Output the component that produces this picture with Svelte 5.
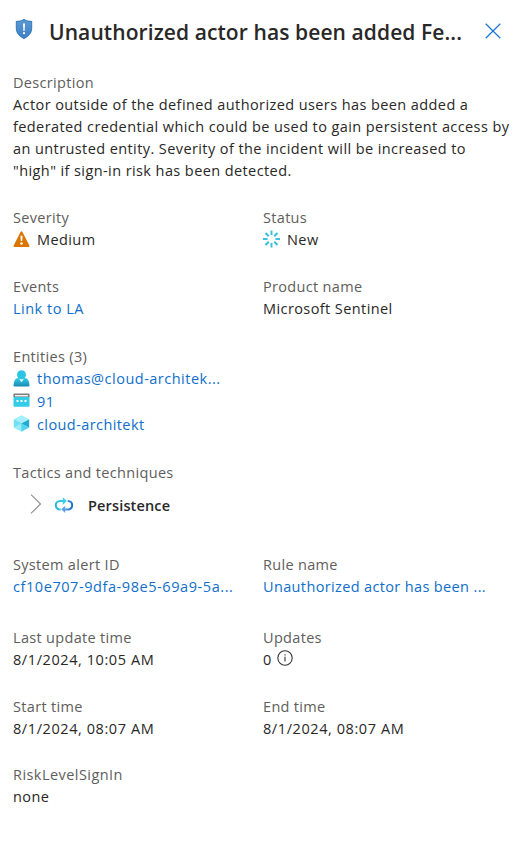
<script>
  const desc = [
    'Actor outside of the defined authorized users has been added a',
    'federated credential which could be used to gain persistent access by',
    'an untrusted entity. Severity of the incident will be increased to',
    '"high" if sign-in risk has been detected.'
  ];
  const rays = [0, 45, 90, 135, 180, 225, 270, 315];
</script>

<main>
  <header>
    <svg class="shield" width="18" height="22" viewBox="0 0 18 22">
      <defs>
        <linearGradient id="sh" x1="0" y1="0" x2="0" y2="1"><stop offset="0" stop-color="#5c99d3" /><stop offset="1" stop-color="#3c80c5" /></linearGradient>
      </defs>
      <path d="M9 .8C11 2.400 14 3 17.200 3v7.500c0 5-4 8.200-8.200 10.700C4.800 18.700.8 15.500.8 10.500V3C4 3 7 2.400 9 .8Z" fill="#3c7fc0" />
      <path d="M9 2C11 3.400 13.500 4 16.200 4v6.500c0 4.400-3.500 7.200-7.200 9.500-3.700-2.300-7.200-5.100-7.200-9.500V4C4.500 4 7 3.400 9 2Z" fill="url(#sh)" />
      <path d="M8 5.500h2l-.4 7.500H8.400Z" fill="#fff" /><circle cx="9" cy="15.200" r="1.100" fill="#fff" />
    </svg>
    <h1>Unauthorized actor has been added Fe...</h1>
    <svg class="close" width="16" height="16" viewBox="0 0 16 16"><path d="M.7.7l14.600 14.600M15.300.7L.7 15.300" stroke="#1877d2" stroke-width="1.250" /></svg>
  </header>

  <section class="description">
    <div class="label">Description</div>
    {#each desc as line}<div>{line}</div>{/each}
  </section>

  <section class="pair severity">
    <div>
      <div class="label">Severity</div>
      <div class="item">
        <svg class="warning" width="17" height="17" viewBox="0 0 17 17"><path d="M7.500.9q1-1.400 2 0l6.800 13.700q.6 1.400-.9 1.400H1.600q-1.500 0-.9-1.400Z" fill="#db7500" /><path d="M7.400 4.800h2.200l-.4 5.200H7.800Z" fill="#fff" /><circle cx="8.500" cy="12.500" r="1.300" fill="#fff" /></svg>
        <span>Medium</span>
      </div>
    </div>
    <div>
      <div class="label">Status</div>
      <div class="item">
        <svg class="up" width="17" height="18" viewBox="0 0 17 18">{#each rays as a}<path d="M8.500.5v4.600" transform="rotate({a} 8.500 9)" stroke="#32bedd" stroke-width="1.900" />{/each}</svg>
        <span>New</span>
      </div>
    </div>
  </section>

  <section class="pair events">
    <div><div class="label">Events</div><div class="link wide">Link to LA</div></div>
    <div><div class="label">Product name</div><div>Microsoft Sentinel</div></div>
  </section>

  <section class="entities">
    <div class="label">Entities (3)</div>
    <div class="item link account">
      <svg width="17" height="17" viewBox="0 0 17 17">
        <defs><linearGradient id="us" x1="0" y1="0" x2="0" y2="1"><stop offset="0" stop-color="#32cee9" /><stop offset="1" stop-color="#198ab3" /></linearGradient></defs>
        <path d="M.5 15.300C.9 10.800 2.400 8 5 8h7c2.600 0 4.100 2.800 4.500 7.300q0 1.200-1.200 1.200H1.700q-1.200 0-1.200-1.200Z" fill="url(#us)" />
        <path d="M5.700 8.200l2.800 4.300 2.800-4.300Z" fill="#d8f5fb" /><circle cx="8.500" cy="4.800" r="4.500" fill="#2bc5e3" />
      </svg>
      <span>thomas@cloud-architek...</span>
    </div>
    <div class="item link">
      <svg width="17" height="17" viewBox="0 0 17 17"><path d="M.5 4.500h16V14q0 .8-.8.8H1.300q-.8 0-.8-.8Z" fill="#32cbe8" /><path d="M1.300 1.500h14.400q.8 0 .8.800V5H.5V2.300q0-.8.8-.8Z" fill="#7b7b7b" /><path d="M2 3.700h13" stroke="#f2f2f2" stroke-width="1.500" /><path d="M3.500 8h2v2h-2zM7.500 8h2v2h-2zM11.500 8h2v2h-2z" fill="#fff" /></svg>
      <span>91</span>
    </div>
    <div class="item link">
      <svg width="17" height="17" viewBox="0 0 17 17"><path d="M8.500.5l7.600 4v8l-7.600 4-7.600-4v-8Z" fill="#50e6ff" /><path d="M8.500.5l7.600 4-7.600 4-7.600-4Z" fill="#a6effb" /><path d="M.9 4.500l7.600 4-7.600 4Z" fill="#74dff3" /><path d="M16.100 4.500l-7.600 4 7.600 4Z" fill="#28a9cc" /><path d="M.9 12.500l7.600-4v8Z" fill="#9cebf9" /><path d="M8.500 8.500l7.600 4-7.600 4Z" fill="#55d3ec" /></svg>
      <span>cloud-architekt</span>
    </div>
  </section>

  <section class="tactics">
    <div class="label">Tactics and techniques</div>
    <div class="tactic">
      <svg class="chevron" width="12" height="20" viewBox="0 0 12 20"><path d="M1 .7L10.500 10 1 19.300" fill="none" stroke="#919191" stroke-width="1.150" /></svg>
      <svg class="cycle" width="18" height="16" viewBox="0 0 18 16">
        <defs><linearGradient id="cy"><stop offset="0" stop-color="#25b8d8" /><stop offset="1" stop-color="#38d1ec" /></linearGradient><linearGradient id="cb"><stop offset="0" stop-color="#5ea0ef" /><stop offset="1" stop-color="#1270cc" /></linearGradient></defs>
        <path d="M5.700 12.400H5A4.200 4.200 0 0 1 5 4h3.500" fill="none" stroke="url(#cy)" stroke-width="2" /><path d="M7.800.3l4 3.700-4 3.700Z" fill="#38d1ec" />
        <path d="M12.700 4h.3a4.200 4.200 0 0 1 0 8.400H9.500" fill="none" stroke="url(#cb)" stroke-width="2" /><path d="M10.200 8.700L6.200 12.300l4 3.700Z" fill="#5ea0ef" />
      </svg>
      <strong>Persistence</strong>
    </div>
  </section>

  <section class="pair alert">
    <div><div class="label">System alert ID</div><div class="link guid">cf10e707-9dfa-98e5-69a9-5a...</div></div>
    <div><div class="label">Rule name</div><div class="link rule">Unauthorized actor has been ...</div></div>
  </section>
  <section class="pair update">
    <div><div class="label">Last update time</div><div class="date">8/1/2024, 10:05 AM</div></div>
    <div>
      <div class="label">Updates</div>
      <div class="count"><span>0</span><svg width="16" height="16" viewBox="0 0 16 16"><circle cx="8" cy="8" r="7.200" fill="none" stroke="#323130" stroke-width="1.050" /><path d="M8 6.700v4.800M8 4.200v1.300" stroke="#323130" stroke-width="1.100" /></svg></div>
    </div>
  </section>
  <section class="pair times">
    <div><div class="label">Start time</div><div class="date">8/1/2024, 08:07 AM</div></div>
    <div><div class="label">End time</div><div class="date">8/1/2024, 08:07 AM</div></div>
  </section>
  <section><div class="label risk">RiskLevelSignIn</div><div>none</div></section>
</main>

<style>
  :global(body) { margin: 0; background: #fff; }
  main { box-sizing: border-box; width: 520px; height: 845px; padding: 17px 0 0 13px; overflow: hidden; background: #fff; color: #292827; font: 14.500px/22px "Open Sans", "Noto Sans", sans-serif; letter-spacing: .41px; white-space: nowrap; }
  svg { display: block; flex: none; }
  header { display: flex; height: 30px; margin-bottom: 25px; }
  .shield { margin: 1px 0 0 2px; }
  h1 { width: 418px; margin: 0 0 0 16px; font-size: 21px; line-height: 30px; font-weight: 600; letter-spacing: .09px; color: #292827; }
  .close { margin: 6px 0 0 18px; }
  .label { color: #605e5c; letter-spacing: .32px; }
  .link { color: #0f6fca; }
  .wide { letter-spacing: .5px; }
  .rule { letter-spacing: .36px; }
  .description { height: 110px; margin-bottom: 25px; }
  .pair { display: grid; grid-template-columns: 250px 1fr; height: 44px; margin-bottom: 25px; }
  .item { display: flex; align-items: center; gap: 7px; height: 22px; }
  .warning { margin-bottom: 2px; }
  .up { margin-bottom: 3px; }
  .events { margin-bottom: 26px; }
  .entities { height: 91px; margin-bottom: 25px; }
  .entities .item { height: 23px; }
  .entities .item svg { margin-bottom: 2px; }
  .entities .account { height: 22px; letter-spacing: .49px; }
  .tactics { height: 92px; }
  .tactic { display: flex; align-items: center; height: 43px; padding-left: 17px; }
  .chevron { margin-bottom: 3px; }
  .cycle { margin: 0 15px 2px 13px; }
  strong { font-weight: 600; letter-spacing: .15px; }
  .alert { margin-bottom: 29px; }
  .guid { letter-spacing: .57px; }
  .date { letter-spacing: .58px; }
  .risk { letter-spacing: .45px; }
  .times { margin-bottom: 24px; }
  .count { display: flex; gap: 5px; }
  .count svg { margin-top: 1px; }
</style>
